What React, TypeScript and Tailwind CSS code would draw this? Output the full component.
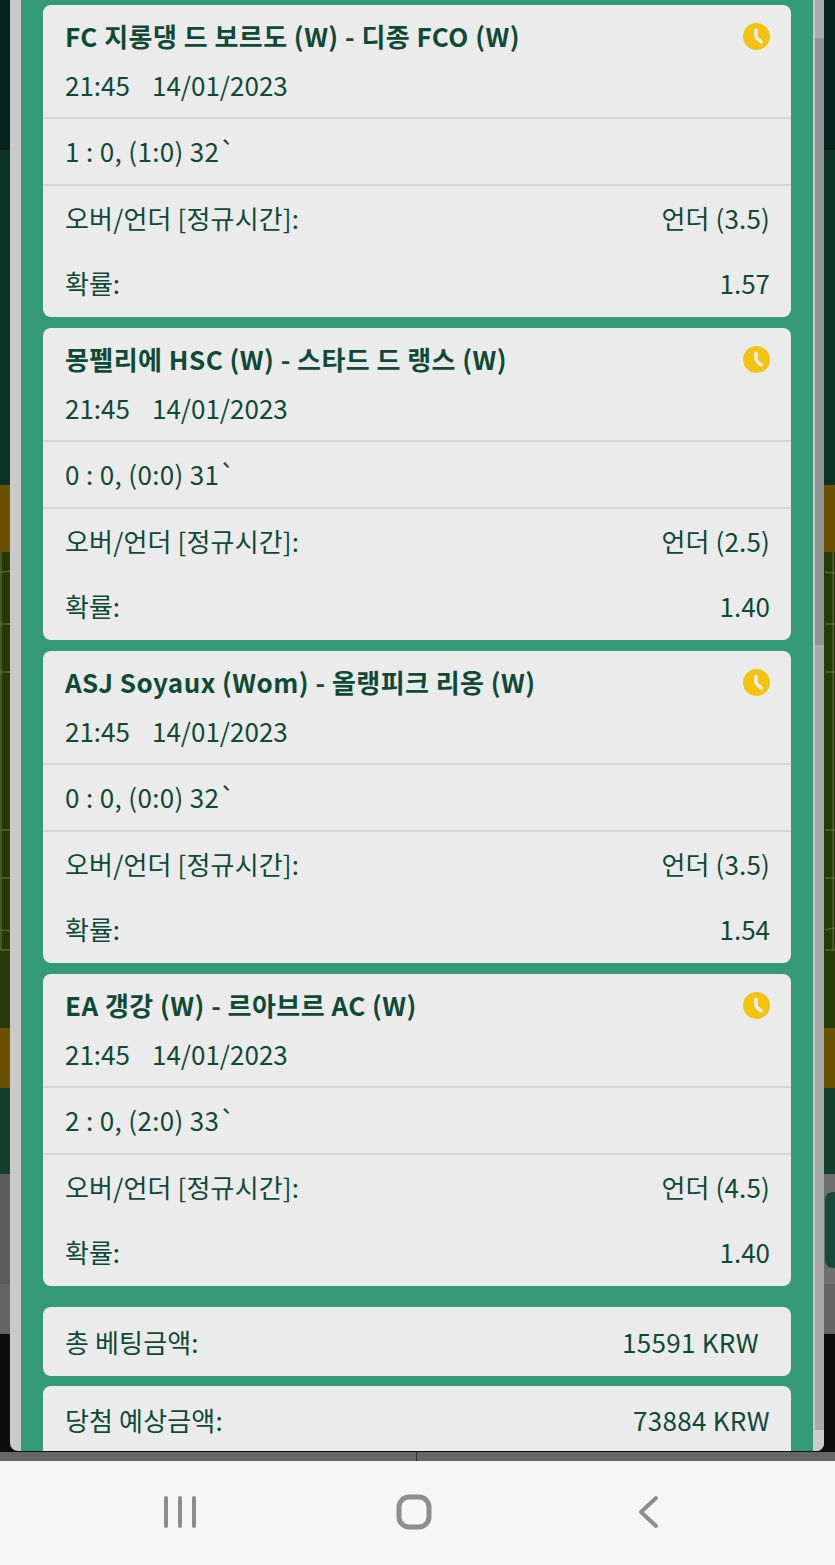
const bets = [
  {title: "FC 지롱댕 드 보르도 (W) - 디종 FCO (W)", score: "1 : 0, (1:0) 32`", pick: "언더 (3.5)", odds: "1.57"},
  {title: "몽펠리에 HSC (W) - 스타드 드 랭스 (W)", score: "0 : 0, (0:0) 31`", pick: "언더 (2.5)", odds: "1.40"},
  {title: "ASJ Soyaux (Wom) - 올랭피크 리옹 (W)", score: "0 : 0, (0:0) 32`", pick: "언더 (3.5)", odds: "1.54"},
  {title: "EA 갱강 (W) - 르아브르 AC (W)", score: "2 : 0, (2:0) 33`", pick: "언더 (4.5)", odds: "1.40"},
];

const ClockIcon = () => {
  return (
    <svg className="absolute right-[21px] top-[18px]" width="27" height="27" viewBox="0 0 26 26" fill="none">
      <circle cx="13" cy="13" r="13" fill="#f2c40f" />
      <path d="M12.5 7v5.5q0 2 5 5.5" stroke="#ebebeb" strokeWidth="3.6" strokeLinecap="round" />
    </svg>
  );
};

const BetCard = ({title, score, pick, odds}: {title: string; score: string; pick: string; odds: string}) => {
  return (
    <div className="bg-[#ebebeb] rounded-[8px] h-[312px] shrink-0">
      <div className="h-[114px] pl-[22px] pr-[21px] border-b-2 border-[#d6d6d6] relative">
        <div className="pt-[11px] h-[60px] leading-[40px] text-[26px] font-semibold tracking-[0.45px] whitespace-nowrap">{title}</div>
        <div className="flex gap-[22px] leading-[40px] text-[26px]">
          <span>21:45</span>
          <span>14/01/2023</span>
        </div>
        <ClockIcon />
      </div>
      <div className="h-[67px] pl-[22px] pr-[21px] pb-[2px] border-b-2 border-[#d6d6d6] flex items-center text-[26px] tracking-[0.35px]">{score}</div>
      <div className="h-[66px] pl-[22px] pr-[21px] pb-[4px] flex items-center justify-between text-[26px] tracking-[0.15px]">
        <span>오버/언더 [정규시간]:</span>
        <span>{pick}</span>
      </div>
      <div className="h-[64px] pl-[22px] pr-[21px] pb-[4px] flex items-center justify-between text-[26px]">
        <span>확률:</span>
        <span>{odds}</span>
      </div>
    </div>
  );
};

const Backdrop = () => {
  return (
    <div className="absolute inset-0 flex flex-col">
      <div className="h-[150px] bg-[#06241b]" />
      <div className="h-[335px] bg-[#0a3325]" />
      <div className="h-[67px] bg-[#6b5200]" />
      <div className="h-[476px] bg-[#263a07]">
        <svg width="835" height="476" viewBox="0 0 835 476" fill="none" stroke="#6a7350" strokeWidth="1">
          <path d="M0 20q6 0 10-1M0 72h10M0 120h10M0 278h10M0 326h10M0 378q6 0 10 1M0 398h10M1 0v398" />
          <path d="M825 20q6 1 10 1M825 72h10M825 120h10M825 278h10M825 326h10M825 378q6-2 10-2M825 398h10M833 0v398" />
        </svg>
      </div>
      <div className="h-[60px] bg-[#6b5200]" />
      <div className="h-[86px] bg-[#14402f]" />
      <div className="h-[110px] bg-linear-to-r from-[#5c5c5c] to-[#707070]" />
      <div className="h-[50px] bg-[#646464]" />
      <div className="h-[118px] bg-[#0d0d0d]" />
      <div className="h-[9px] bg-[#666666] pl-[416px]">
        <div className="w-[1px] h-full bg-[#14402f]" />
      </div>
      <div className="absolute right-0 top-[1192px] w-[10px] h-[76px] rounded-l-[8px] bg-[#17493a]" />
    </div>
  );
};

const NavBar = () => {
  return (
    <div className="h-[104px] bg-[#f6f6f6] flex items-center justify-center pr-[7px] pb-[2px] text-[#8e8e8e]">
      <div className="w-[234px] flex justify-center">
        <svg width="34" height="34" viewBox="0 0 34 34" fill="none" stroke="currentColor" strokeWidth="4" strokeLinecap="round">
          <path d="M3 3v28M17 3v28M31 3v28" />
        </svg>
      </div>
      <div className="w-[234px] flex justify-center">
        <svg width="36" height="36" viewBox="0 0 36 36" fill="none" stroke="currentColor" strokeWidth="5">
          <rect x="3" y="3" width="30" height="30" rx="10" />
        </svg>
      </div>
      <div className="w-[234px] flex justify-center">
        <svg width="24" height="36" viewBox="0 0 24 36" fill="none" stroke="currentColor" strokeWidth="4" strokeLinecap="round" strokeLinejoin="round">
          <path d="M20 4 5 18l15 14" />
        </svg>
      </div>
    </div>
  );
};

const App = () => {
  return (
    <div className="w-[835px] h-[1565px] overflow-hidden text-[#0f4a37] font-['Noto_Sans_CJK_KR','Noto_Sans',sans-serif]">
      <div className="h-[1461px] relative">
        <Backdrop />
        <div className="absolute left-[10px] top-0 w-[814px] h-[1451px] rounded-b-[8px] overflow-hidden bg-[#cbc9c9] flex pl-[11px]">
          <div className="w-[792px] bg-[#359a78] px-[22px] pt-[5px] flex flex-col gap-[11px] overflow-hidden">
            {bets.map((bet) => (
              <BetCard key={bet.title} {...bet} />
            ))}
            <div className="mt-[10px] h-[69px] shrink-0 bg-[#ebebeb] rounded-[8px] pl-[22px] pr-[32px] pb-[1px] flex items-center justify-between text-[26px] tracking-[0.15px]">
              <span>총 베팅금액:</span>
              <span className="tracking-[0.3px]">15591 KRW</span>
            </div>
            <div className="-mt-[1px] h-[80px] shrink-0 bg-[#ebebeb] rounded-[8px] pl-[22px] pr-[21px] pb-[14px] flex items-center justify-between text-[26px] tracking-[0.15px]">
              <span>당첨 예상금액:</span>
              <span className="tracking-[0.3px]">73884 KRW</span>
            </div>
          </div>
          <div className="w-[2px] bg-[#c9c9c9]" />
          <div className="flex-1 flex flex-col bg-[#a9a9a9]">
            <div className="h-[38px] bg-[#ababab]" />
            <div className="h-[607px] bg-[#939393]" />
            <div className="h-[785px] bg-[#a9a9a9]" />
            <div className="flex-1 bg-[#cccccc]" />
          </div>
        </div>
      </div>
      <NavBar />
    </div>
  );
};

export default App;
